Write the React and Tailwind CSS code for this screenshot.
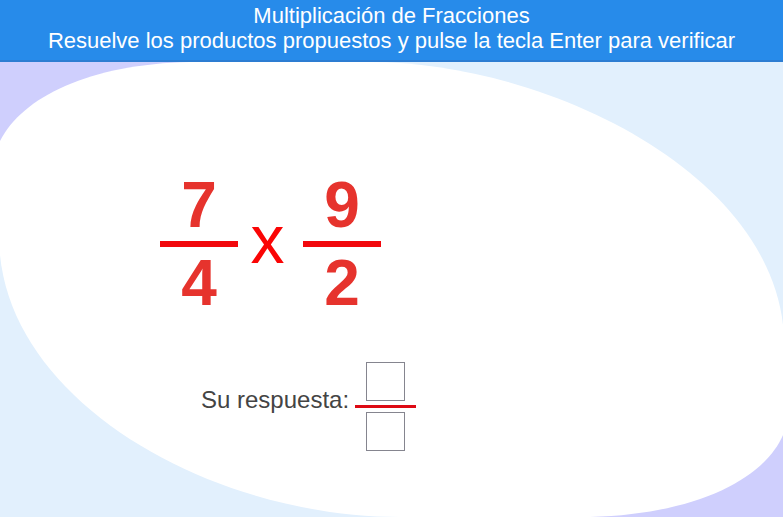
function Fraction({ top, bottom }) {
  return (
    <div className="flex w-[78px] flex-col items-center gap-1 text-[64px] leading-none font-bold text-[#e6332d]">
      <span>{top}</span>
      <div className="h-1.5 w-full bg-[#f2080d]" />
      <span>{bottom}</span>
    </div>
  );
}

function AnswerBox({ label }) {
  return (
    <input
      type="text"
      inputMode="numeric"
      aria-label={label}
      className="size-[39px] border border-[#85858f] bg-white text-center text-2xl text-[#333333] outline-none"
    />
  );
}

function Backdrop() {
  return (
    <svg
      className="absolute inset-0 h-full w-full"
      viewBox="0 0 783 455"
      preserveAspectRatio="none"
      aria-hidden="true"
    >
      <rect width="783" height="455" fill="#e2f0fd" />
      <path d="M0 0H200V90H0Z M583 365H783V455H583Z" fill="#cfcffd" />
      <path
        d="M0 79C22 35 90 2 190 0H370C540 0 765 105 783 263V373C765 415 700 452 590 455H400C215 455 15 345 0 193Z"
        fill="#ffffff"
      />
    </svg>
  );
}

export default function App() {
  return (
    <div className="flex min-h-screen flex-col font-['Liberation_Sans',Arial,sans-serif]">
      <header className="border-b-2 border-[#2d7dd2] bg-[#278bea] pt-[3px] pb-[7px] text-center text-[22px] leading-[25px] text-white">
        <h1>Multiplicación de Fracciones</h1>
        <p>Resuelve los productos propuestos y pulse la tecla Enter para verificar</p>
      </header>
      <main className="relative flex-1">
        <Backdrop />
        <div className="relative pt-[111px] pl-[160px]">
          <div className="flex items-center">
            <Fraction top="7" bottom="4" />
            <span className="w-[65px] pr-1.5 pb-2.5 text-center text-[68px] leading-none text-[#fa0505]">x</span>
            <Fraction top="9" bottom="2" />
          </div>
          <form className="mt-[47px] ml-[41px] flex items-center gap-1.5" onSubmit={(e) => e.preventDefault()}>
            <span className="pb-3.5 text-2xl leading-7 text-[#444444]">Su respuesta:</span>
            <div className="flex w-[61px] flex-col items-center gap-1">
              <AnswerBox label="Numerador" />
              <div className="h-[3px] w-full bg-[#dd0a14]" />
              <AnswerBox label="Denominador" />
            </div>
          </form>
        </div>
      </main>
    </div>
  );
}
